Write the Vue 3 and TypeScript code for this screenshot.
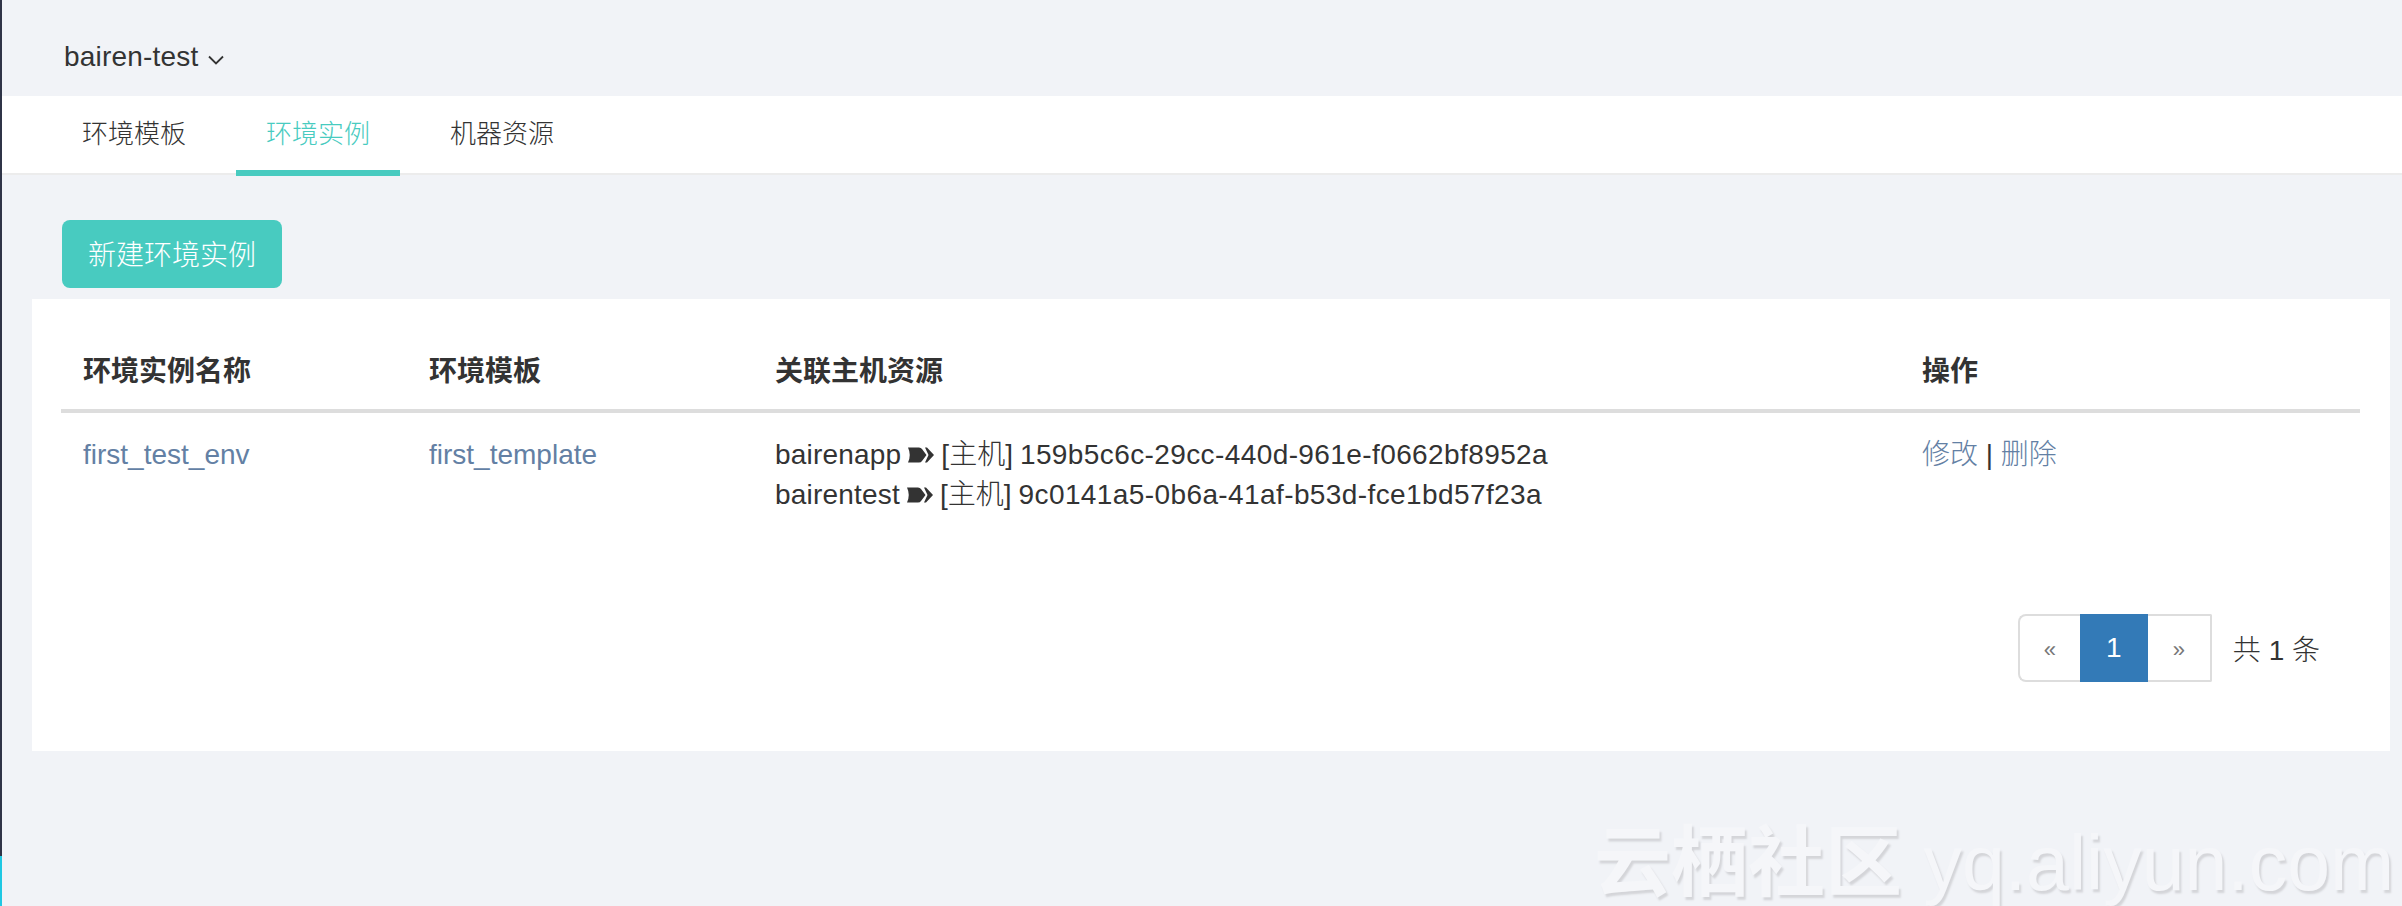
<script setup lang="ts">
const tabs = ['环境模板', '环境实例', '机器资源'];
const hosts = [
  { name: 'bairenapp', id: '159b5c6c-29cc-440d-961e-f0662bf8952a' },
  { name: 'bairentest', id: '9c0141a5-0b6a-41af-b53d-fce1bd57f23a' },
];
</script>

<template>
  <div class="page">
    <div class="topbar">
      <span class="project">bairen-test</span>
      <svg class="chevron" width="16" height="10" viewBox="0 0 16 10">
        <path d="M1 1.5 L8 8.5 L15 1.5" fill="none" stroke="#333" stroke-width="1.8" />
      </svg>
    </div>
    <nav class="tabs">
      <a v-for="(tab, i) in tabs" :key="tab" class="tab" :class="{ active: i === 1 }">{{ tab }}</a>
    </nav>
    <div class="toolbar">
      <button class="primary">新建环境实例</button>
    </div>
    <section class="card">
      <table class="grid">
        <colgroup>
          <col class="col-name" />
          <col class="col-name" />
          <col class="col-hosts" />
          <col />
        </colgroup>
        <thead>
          <tr>
            <th>环境实例名称</th>
            <th>环境模板</th>
            <th>关联主机资源</th>
            <th>操作</th>
          </tr>
        </thead>
        <tbody>
          <tr>
            <td><a class="link">first_test_env</a></td>
            <td><a class="link">first_template</a></td>
            <td>
              <div v-for="host in hosts" :key="host.name" class="host">
                <span class="host-name">{{ host.name }}</span>
                <svg class="arrow" width="26" height="18" viewBox="0 0 26 18">
                  <path d="M0 1.5 H11 Q13 1.5 14 3 L18.5 9 L14 15 Q13 16.5 11 16.5 H0 Q3.5 9 0 1.5 Z" fill="#333" />
                  <path d="M17 1.5 H19 L26 9 L19 16.5 H17 L20.5 9 Z" fill="#333" />
                </svg>
                <span class="host-type">[主机]</span>
                <span class="host-id">{{ host.id }}</span>
              </div>
            </td>
            <td><a class="link">修改</a> | <a class="link">删除</a></td>
          </tr>
        </tbody>
      </table>
      <div class="pager-row">
        <ul class="pager">
          <li>«</li>
          <li class="current">1</li>
          <li>»</li>
        </ul>
        <span class="total">共 1 条</span>
      </div>
    </section>
    <div class="watermark"><b>云栖社区</b> yq.aliyun.com</div>
  </div>
</template>

<style>
html,
body {
  margin: 0;
  background: #f1f3f7;
}
</style>

<style scoped>
.page {
  position: relative;
  height: 906px;
  overflow: hidden;
  box-sizing: border-box;
  padding-left: 2px;
  background: #f1f3f7;
  color: #333;
  font-family: "Liberation Sans", "Noto Sans CJK SC", sans-serif;
  font-size: 28px;
}

.page::before,
.page::after {
  content: "";
  position: absolute;
  left: 0;
  width: 2px;
}

.page::before {
  top: 0;
  height: 856px;
  background: #2f3447;
}

.page::after {
  top: 856px;
  height: 50px;
  background: #1fc8e3;
}

.topbar {
  display: flex;
  align-items: center;
  gap: 9px;
  height: 96px;
  padding: 18px 0 0 62px;
  box-sizing: border-box;
}

.project {
  letter-spacing: 0.2px;
}

.chevron {
  margin-top: 5px;
}

.tabs {
  display: flex;
  gap: 20px;
  height: 79px;
  padding-left: 50px;
  background: #fff;
  border-bottom: 2px solid #ececec;
  box-sizing: border-box;
}

.tab {
  padding: 0 30px;
  font-size: 26px;
  font-weight: 300;
  line-height: 77px;
  white-space: nowrap;
}

.tab.active {
  color: #48cbc0;
  height: 80px;
  box-sizing: border-box;
  border-bottom: 6px solid #48cbc0;
}

.toolbar {
  padding: 45px 0 11px 60px;
}

.primary {
  display: block;
  width: 220px;
  height: 68px;
  padding: 0 0 2px;
  border: 0;
  border-radius: 8px;
  background: #48cbc0;
  color: #fff;
  font: inherit;
  font-weight: 300;
}

.card {
  margin: 0 12px 0 30px;
  height: 452px;
  padding: 0 30px 0 29px;
  box-sizing: border-box;
  background: #fff;
}

.grid {
  width: 100%;
  border-collapse: collapse;
  table-layout: fixed;
}

.col-name {
  width: 346px;
}

.col-hosts {
  width: 1147px;
}

.grid th {
  height: 112px;
  padding: 30px 22px 0;
  box-sizing: border-box;
  border-bottom: 4px solid #ddd;
  text-align: left;
  font-weight: 700;
}

.grid td {
  height: 102px;
  padding: 22px 22px 0;
  box-sizing: border-box;
  vertical-align: top;
  line-height: 40px;
  font-weight: 300;
}

.link {
  color: #6380a4;
}

.host {
  display: flex;
  align-items: center;
  gap: 7px;
  white-space: nowrap;
}

.host-name {
  letter-spacing: 0.2px;
}

.host-id {
  letter-spacing: 0.4px;
}

.pager-row {
  display: flex;
  justify-content: flex-end;
  align-items: center;
  margin-top: 99px;
  padding-right: 40px;
  gap: 21px;
}

.pager {
  display: flex;
  margin: 0;
  padding: 0;
  list-style: none;
  height: 68px;
}

.pager li {
  width: 62px;
  box-sizing: border-box;
  border: 2px solid #ddd;
  color: #777;
  font-size: 22px;
  line-height: 68px;
  text-align: center;
}

.pager li:first-child {
  border-right: 0;
  border-radius: 8px 0 0 8px;
}

.pager li:last-child {
  width: 64px;
  border-left: 0;
  border-radius: 0 2px 2px 0;
}

.pager li.current {
  width: 68px;
  border: 0;
  background: #337ab7;
  color: #fff;
  font-size: 28px;
}

.total {
  white-space: nowrap;
  font-weight: 300;
}

.watermark {
  position: absolute;
  left: 1594px;
  top: 818px;
  white-space: nowrap;
  font-size: 77px;
  line-height: 90px;
  color: #f5f6f9;
  text-shadow: 2px 3px 2px #d4d5d9;
}
</style>
